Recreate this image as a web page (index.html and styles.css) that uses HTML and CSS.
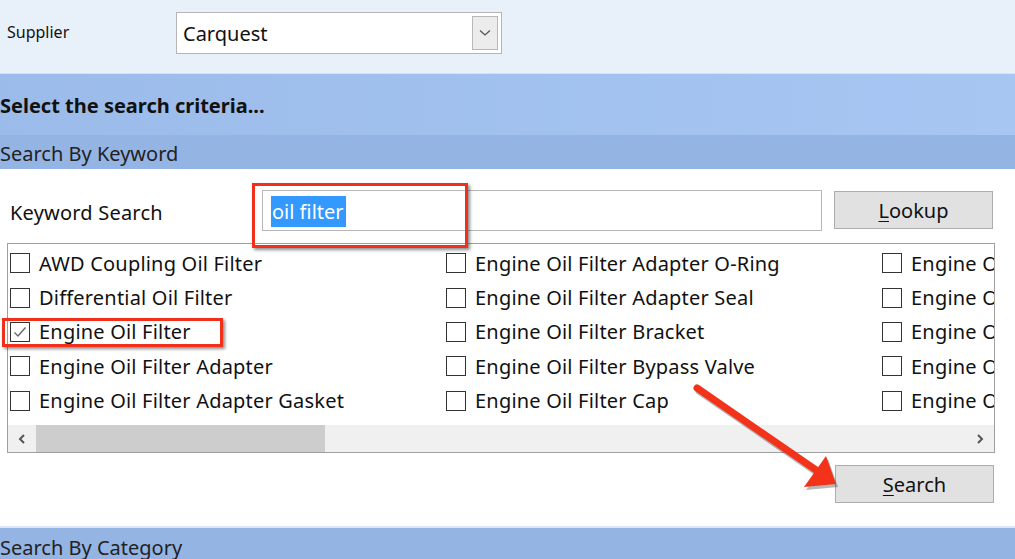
FILE: index.html
```html
<!DOCTYPE html>
<html lang="en">
<head>
    <meta charset="UTF-8">
    <title>Part Search</title>
    <link rel="stylesheet" href="styles.css">
</head>
<body>

    <div class="supplier-bar">
        <span class="supplier-label">Supplier</span>
        <div class="combo">
            <span class="combo-text">Carquest</span>
            <span class="combo-btn">
                <svg width="12" height="8" viewBox="0 0 12 8"><path d="M1 1.5 L6 6 L11 1.5" fill="none" stroke="#555" stroke-width="1.3"/></svg>
            </span>
        </div>
    </div>

    <div class="criteria-band">Select the search criteria...</div>
    <div class="group-title">Search By Keyword</div>

    <div class="keyword-panel">
        <div class="keyword-row">
            <span class="keyword-label">Keyword Search</span>
            <div class="keyword-input"><span class="selected-text">oil filter</span></div>
            <button class="win-btn lookup-btn"><u>L</u>ookup</button>
        </div>

        <div class="check-list">
            <div class="check-grid">
                <label class="check-item"><span class="box"></span>AWD Coupling Oil Filter</label>
                <label class="check-item"><span class="box"></span>Engine Oil Filter Adapter O-Ring</label>
                <label class="check-item"><span class="box"></span>Engine Oil Filter Cover</label>

                <label class="check-item"><span class="box"></span>Differential Oil Filter</label>
                <label class="check-item"><span class="box"></span>Engine Oil Filter Adapter Seal</label>
                <label class="check-item"><span class="box"></span>Engine Oil Filter Gasket</label>

                <label class="check-item"><span class="box checked"><svg width="16" height="16" viewBox="0 0 16 16"><path d="M2.5 8.5 L6 12 L13.5 3.5" fill="none" stroke="#666" stroke-width="1.4"/></svg></span>Engine Oil Filter</label>
                <label class="check-item"><span class="box"></span>Engine Oil Filter Bracket</label>
                <label class="check-item"><span class="box"></span>Engine Oil Filter Housing</label>

                <label class="check-item"><span class="box"></span>Engine Oil Filter Adapter</label>
                <label class="check-item"><span class="box"></span>Engine Oil Filter Bypass Valve</label>
                <label class="check-item"><span class="box"></span>Engine Oil Filter Housing Cap</label>

                <label class="check-item"><span class="box"></span>Engine Oil Filter Adapter Gasket</label>
                <label class="check-item"><span class="box"></span>Engine Oil Filter Cap</label>
                <label class="check-item"><span class="box"></span>Engine Oil Filter Housing Gasket</label>
            </div>
            <div class="hscroll">
                <span class="arrow">
                    <svg width="10" height="12" viewBox="0 0 10 12"><path d="M7 2 L3 6 L7 10" fill="none" stroke="#555" stroke-width="2"/></svg>
                </span>
                <div class="track"><div class="thumb"></div></div>
                <span class="arrow">
                    <svg width="10" height="12" viewBox="0 0 10 12"><path d="M3 2 L7 6 L3 10" fill="none" stroke="#555" stroke-width="2"/></svg>
                </span>
            </div>
        </div>

        <div class="search-row">
            <button class="win-btn search-btn"><u>S</u>earch</button>
        </div>
    </div>

    <div class="group-title bottom">Search By Category</div>

    <!-- annotation overlay -->
    <div class="mark mark-keyword"></div>
    <div class="mark mark-check"></div>
    <svg class="mark-arrow" width="1015" height="559" viewBox="0 0 1015 559">
        <g transform="translate(2,3)" opacity="0.35">
            <line x1="697" y1="388" x2="816" y2="470" stroke="#333" stroke-width="7" stroke-linecap="round"/>
            <polygon points="836,484 804,487 826,456" fill="#333"/>
        </g>
        <line x1="697" y1="388" x2="816" y2="470" stroke="#f2331a" stroke-width="7" stroke-linecap="round"/>
        <polygon points="836,484 804,487 826,456" fill="#f2331a"/>
    </svg>

</body>
</html>
```

FILE: styles.css
```css
body {
    margin: 0;
    width: 1015px;
    height: 559px;
    overflow: hidden;
    font-family: 'Noto Sans', 'Open Sans', sans-serif;
    color: #111;
    background-color: white;
    position: relative;
}

/* Supplier bar */
.supplier-bar {
    height: 74px;
    background-color: #e8f0fa;
    border-bottom: 1px solid #d4e2f6;
    display: flex;
    align-items: center;
    box-sizing: border-box;
    padding-left: 7px;
}

.supplier-label {
    width: 169px;
    font-size: 16px;
    margin-top: -10px;
}

.combo {
    width: 326px;
    height: 42px;
    margin-top: -7px;
    box-sizing: border-box;
    border: 1px solid #b5b5b5;
    background-color: white;
    display: flex;
    align-items: center;
    justify-content: space-between;
    padding: 0 3px 0 6px;
}

.combo-text {
    font-size: 20px;
    padding-top: 1px;
}

.combo-btn {
    width: 26px;
    height: 34px;
    box-sizing: border-box;
    border: 1px solid #b8b8b8;
    background-color: #ececec;
    display: flex;
    align-items: center;
    justify-content: center;
}

/* Bands */
.criteria-band {
    height: 61px;
    background: linear-gradient(to right, #9bbbea, #a7c6f2);
    font-size: 20px;
    font-weight: bold;
    display: flex;
    align-items: center;
    padding-top: 2px;
    box-sizing: border-box;
}

.group-title {
    height: 34px;
    background-color: #94b4e4;
    font-size: 20px;
    display: flex;
    align-items: center;
    padding-top: 3px;
    box-sizing: border-box;
    color: #222;
}

.group-title.bottom {
    height: 34px;
    padding-top: 6px;
    border-top: 2px solid #dce7f5;
}

/* Keyword panel */
.keyword-panel {
    height: 357px;
    box-sizing: border-box;
    padding: 21px 0 0 7px;
}

.keyword-row {
    display: flex;
    align-items: flex-start;
    height: 53px;
}

.keyword-label {
    width: 255px;
    padding-left: 3px;
    font-size: 20px;
    letter-spacing: 0.2px;
    line-height: 46px;
    box-sizing: border-box;
}

.keyword-input {
    width: 560px;
    height: 41px;
    box-sizing: border-box;
    border: 1px solid #b7b7b7;
    padding: 5px 0 0 8px;
}

.selected-text {
    background-color: #3399ff;
    color: white;
    font-size: 20px;
    line-height: 31px;
    display: inline-block;
    padding: 0 2px 0 1px;
}

.win-btn {
    font-family: 'Noto Sans', 'Open Sans', sans-serif;
    font-size: 20px;
    color: #111;
    background-color: #e1e1e1;
    border: 1px solid #adadad;
    width: 159px;
    height: 38px;
    padding: 0;
    cursor: pointer;
}

.win-btn u {
    text-decoration-thickness: 1px;
    text-underline-offset: 3px;
}

.lookup-btn {
    margin-left: 12px;
    margin-top: 1px;
}

/* Check list */
.check-list {
    width: 988px;
    height: 210px;
    box-sizing: border-box;
    border: 1px solid #a0a0a0;
    display: flex;
    flex-direction: column;
    overflow: hidden;
}

.check-grid {
    flex: 1;
    display: grid;
    grid-template-columns: 436px 436px 436px;
    grid-auto-rows: 34.4px;
    padding: 2px 0 0 2px;
    overflow: hidden;
}

.check-item {
    display: flex;
    align-items: center;
    white-space: nowrap;
    font-size: 20px;
    letter-spacing: 0.2px;
}

.box {
    width: 20px;
    height: 20px;
    box-sizing: border-box;
    border: 1.5px solid #333;
    margin-right: 9px;
    flex-shrink: 0;
    display: flex;
    align-items: center;
    justify-content: center;
}

.hscroll {
    height: 27px;
    background-color: #f0f0f0;
    display: flex;
    align-items: center;
}

.hscroll .arrow {
    width: 28px;
    height: 27px;
    display: flex;
    align-items: center;
    justify-content: center;
}

.track {
    flex: 1;
    height: 27px;
}

.thumb {
    width: 289px;
    height: 27px;
    background-color: #cdcdcd;
}

.search-row {
    display: flex;
    justify-content: flex-end;
    padding: 12px 21px 0 0;
}

/* Annotations */
.mark {
    position: absolute;
    border: 3px solid #f0301a;
    box-shadow: 2px 2px 3px rgba(0, 0, 0, 0.45);
    box-sizing: border-box;
}

.mark-keyword {
    left: 252px;
    top: 183px;
    width: 216px;
    height: 65px;
}

.mark-check {
    left: 2px;
    top: 318px;
    width: 221px;
    height: 29px;
}

.mark-arrow {
    position: absolute;
    left: 0;
    top: 0;
    pointer-events: none;
}
```
